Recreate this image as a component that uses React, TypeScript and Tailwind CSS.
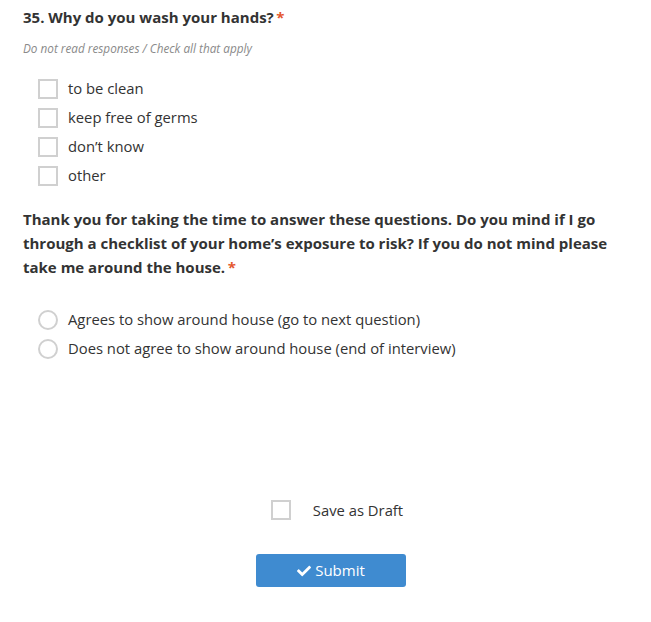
import React from "react";
import { FaCheck } from "react-icons/fa";

const font = { fontFamily: '"Open Sans", "Noto Sans", sans-serif' };

function Box() {
  return <span className="block w-[20px] h-[20px] border-2 border-[#d0d0d0] bg-white shrink-0" />;
}

function Radio() {
  return <span className="block w-[20px] h-[20px] rounded-full border-2 border-[#d0d0d0] bg-white shrink-0" />;
}

export default function App() {
  const checks = ["to be clean", "keep free of germs", "don\u2019t know", "other"];
  const radios = [
    "Agrees to show around house (go to next question)",
    "Does not agree to show around house (end of interview)",
  ];
  return (
    <div className="w-[651px] h-[622px] bg-white text-[#333] pl-[23px] pr-[12px] pt-[7px] font-['Open_Sans',sans-serif]" style={font}>
      <h2 className="text-[15px] font-bold leading-[20px] text-[#333]">
        35. Why do you wash your hands?{"\u2009"}<span className="text-[#e4572e]">*</span>
      </h2>
      <p className="mt-[13px] text-[11.75px] italic leading-[16px] text-[#8a8a8a]">
        Do not read responses / Check all that apply
      </p>
      <div className="mt-[18px] ml-[15px] flex flex-col">
        {checks.map((c) => (
          <label key={c} className="flex items-center gap-[10px] h-[29px] text-[14.8px]">
            <Box />
            <span>{c}</span>
          </label>
        ))}
      </div>
      <p className="mt-[17px] text-[15px] font-bold leading-[24px] text-[#333] pr-[10px]">
        Thank you for taking the time to answer these questions. Do you mind if I go through a checklist of your home’s exposure to risk? If you do not mind please take me around the house.{"\u2009"}<span className="text-[#e4572e]">*</span>
      </p>
      <div className="mt-[26px] ml-[15px] flex flex-col">
        {radios.map((r) => (
          <label key={r} className="flex items-center gap-[10px] h-[29px] text-[14.8px]">
            <Radio />
            <span>{r}</span>
          </label>
        ))}
      </div>
      <div className="mt-[137px] flex justify-center">
        <label className="flex items-center gap-[22px] h-[20px] text-[14.8px] pl-[12px]">
          <Box />
          <span>Save as Draft</span>
        </label>
      </div>
      <div className="mt-[34px] flex justify-center">
        <button className="w-[150px] h-[33px] rounded-[3px] bg-[#3f8bd0] text-white text-[15px] flex items-center justify-center gap-[4px]">
          <FaCheck className="w-[14px] h-[14px]" />
          <span>Submit</span>
        </button>
      </div>
    </div>
  );
}
